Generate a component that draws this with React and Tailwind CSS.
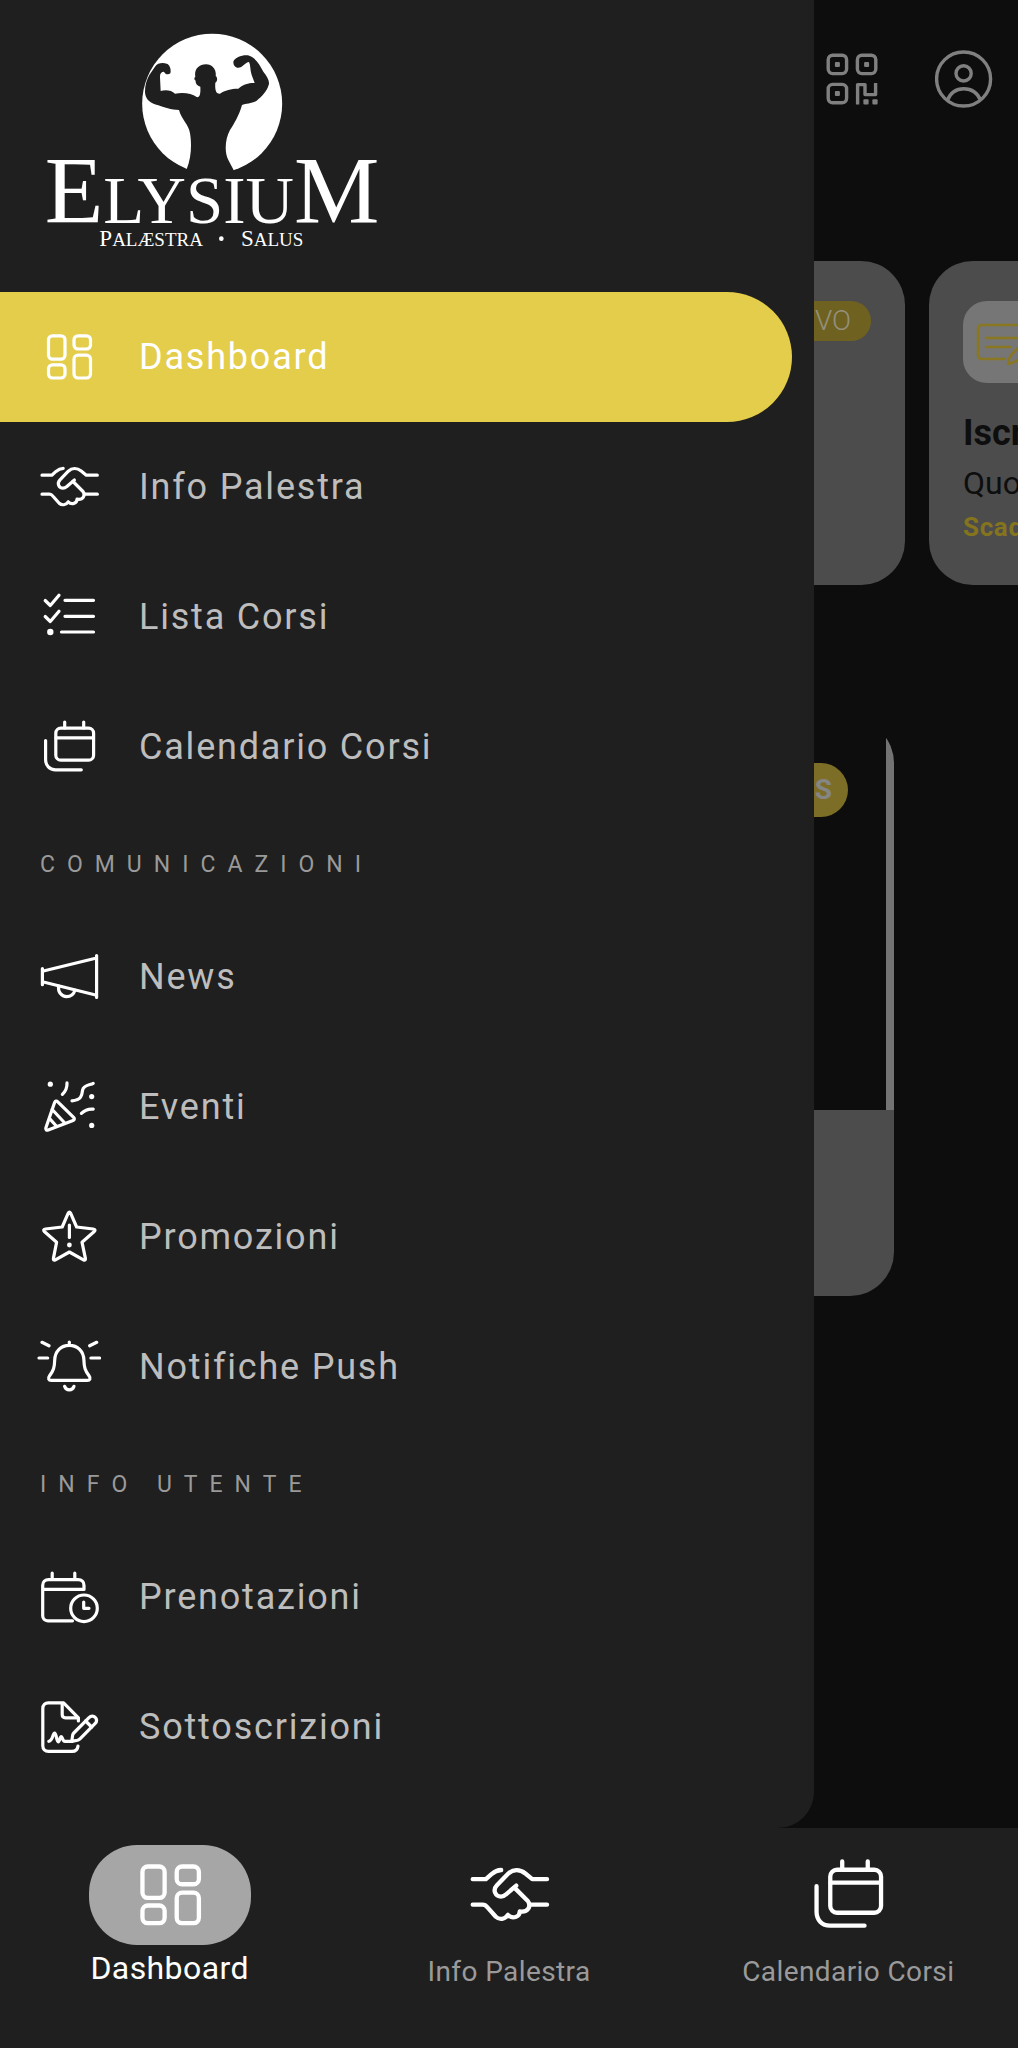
import clsx from 'clsx'

function Icon({ className, strokeWidth = 3.2, children }) {
  return (
    <svg
      viewBox="0 0 64 64"
      fill="none"
      stroke="currentColor"
      strokeWidth={strokeWidth}
      strokeLinecap="round"
      strokeLinejoin="round"
      aria-hidden="true"
      className={clsx('shrink-0', className)}
    >
      {children}
    </svg>
  )
}

const DashboardIcon = (props) => (
  <Icon {...props}>
    <rect x="11.5" y="10.8" width="16.5" height="23.4" rx="4" />
    <rect x="11.5" y="39.8" width="16.5" height="13.2" rx="4" />
    <rect x="37" y="10.8" width="16.5" height="13.2" rx="4" />
    <rect x="37" y="30.2" width="16.5" height="22.8" rx="4" />
  </Icon>
)

const HandshakeIcon = (props) => (
  <Icon {...props}>
    <path d="M5 20.2H14.8L19 16.4C21.4 14.4 23.6 13.5 26.2 13.4" />
    <path d="M60.3 20.2H49.3L44.2 16C40 12.7 35 12.8 31.3 16.2L23 24.8C19.5 28.4 22 33.2 26 33.2C27.4 33.2 28.6 32.7 29.6 31.7L37.4 25" />
    <path d="M36 26.5L46 36.5C48.6 40 46.4 45.3 40 44.2C40.2 48.4 34.5 50.2 31.2 46.8C29 50.3 24.8 50.6 22.2 48.2L16 41.2C15 40 14.2 39.2 12.5 39.2H5" />
    <path d="M47.5 39.2H60.3" />
  </Icon>
)

const ListIcon = (props) => (
  <Icon {...props}>
    <path d="M8.2 15.5L13.3 20.5L22 10.2M8.2 31.5L13.3 36.5L22 26.2" />
    <path d="M28 15.3H56.5M28 31.3H56.5M24.5 47H56.5" />
    <circle cx="13.3" cy="47" r="3.2" fill="currentColor" stroke="none" />
  </Icon>
)

const CalendarsIcon = (props) => (
  <Icon {...props}>
    <rect x="18.8" y="13.2" width="37.8" height="32" rx="5" />
    <path d="M19 22.8H56M27.7 7V13M46.7 7V13" />
    <path d="M8.6 25.5V44.5C8.6 50.5 12.5 54.8 18.5 54.8H44.3" />
  </Icon>
)

const MegaphoneIcon = (props) => (
  <Icon {...props}>
    <path d="M5.4 23.5V39.7M59.6 10.5V52.5M5.4 26.3L59.6 13M5.4 36.7L59.6 50.3" />
    <path d="M21.6 41.2C20.8 47 24.5 51.6 29.5 51.6C33.5 51.6 36.8 49.3 37.9 45.4" />
  </Icon>
)

const PartyIcon = (props) => (
  <Icon {...props}>
    <path d="M17.6 27.5C18.2 26 19.6 25.6 20.8 26.8L36.6 42.3C37.8 43.6 37.5 44.8 36 45.4L11.2 55C9.4 55.6 8.3 54.5 8.9 52.8Z" />
    <path d="M15.2 34.5L27.3 47.5M12.6 43.6L19.3 51" />
    <path d="M30 7.8C30.2 12 28.6 16.2 25.4 19.3" />
    <path d="M56.2 8.4C53.6 10 46.6 9.6 45.6 15C45 20 44.6 25 35 25.8" />
    <path d="M56.2 34.2C51.5 33.8 47.6 35.2 44.4 38.4" />
    <g fill="currentColor" stroke="none">
      <circle cx="13.3" cy="9.2" r="2.6" />
      <circle cx="54.7" cy="21.6" r="2.6" />
      <circle cx="54.7" cy="50.4" r="2.6" />
    </g>
  </Icon>
)

const StarIcon = (props) => (
  <Icon {...props}>
    <path d="M31.2 8.2Q32.4 5.8 33.6 8.2L39.6 22L56.2 24Q59.4 24.6 57 26.8L45 37.2L48.4 53.4Q48.7 56 46.4 54.8L32.4 47L18.4 54.8Q16.1 56 16.4 53.4L19.6 37.2L7.6 26.8Q5.4 24.6 8.4 24L25.2 22Z" />
    <path d="M32.4 20V32.5" />
    <circle cx="32.4" cy="40" r="2.4" fill="currentColor" stroke="none" />
  </Icon>
)

const BellIcon = (props) => (
  <Icon {...props}>
    <path d="M32.3 7V10M32.3 10.3C24 10.3 18 16 17.7 25C17.5 32.5 16.5 35.5 12.6 40.8C10.6 43.6 11.6 45.4 14.4 45.4H50.2C53 45.4 54 43.6 52 40.8C48.1 35.5 47.1 32.5 46.9 25C46.6 16 40.6 10.3 32.3 10.3Z" />
    <path d="M27.6 51.3C29 56 35.6 56 37 51.3" />
    <path d="M5 7.3L12 10.8M2 23H10.7M59.7 7.3L52.7 10.8M62.6 23H53.9" />
  </Icon>
)

const CalendarClockIcon = (props) => (
  <Icon {...props}>
    <path d="M35.5 55.8H10.8C7.8 55.8 5.7 53.8 5.7 50.8V20.4C5.7 17 8.2 14.6 11.5 14.6H41.2C44.6 14.6 47 17 47 20.4V24.4H5.7" />
    <path d="M15.2 8.2V14M37.8 8.2V14" />
    <circle cx="47" cy="43.3" r="13.3" />
    <path d="M46.7 37V43.3H52" />
  </Icon>
)

const SignatureIcon = (props) => (
  <Icon {...props}>
    <path d="M41.4 26V22.8L26.6 7.8H11.4C8 7.8 5.8 10 5.8 13.4V50.8C5.8 54.2 8 56.4 11.4 56.4H35C38.4 56.4 40.6 54.6 41 51" />
    <path d="M25.2 8.4V19.6Q25.2 22.8 28.4 22.8H40.8" />
    <path d="M11.8 46.3C16 46 15.6 38.2 17.6 38.2C19.6 38.2 19.4 46.8 21.2 46.8C22.8 46.8 22.8 41.6 24.2 41.6C25.8 41.6 25.2 46.4 28 46.4H34.8" />
    <path d="M34.8 46.4L35.6 40.4Q35.8 39 36.8 38L52 22.6C54 20.6 56.6 20.6 58.2 22.4C60 24.2 60 26.6 58 28.6L43 43.8Q42 44.8 40.6 45.2Z" />
    <path d="M48.6 26L54.6 32" />
  </Icon>
)

const mainLinks = [
  { label: 'Dashboard', icon: DashboardIcon, active: true },
  { label: 'Info Palestra', icon: HandshakeIcon },
  { label: 'Lista Corsi', icon: ListIcon },
  { label: 'Calendario Corsi', icon: CalendarsIcon },
]

const sections = [
  {
    title: 'COMUNICAZIONI',
    links: [
      { label: 'News', icon: MegaphoneIcon },
      { label: 'Eventi', icon: PartyIcon },
      { label: 'Promozioni', icon: StarIcon },
      { label: 'Notifiche Push', icon: BellIcon },
    ],
  },
  {
    title: 'INFO UTENTE',
    links: [
      { label: 'Prenotazioni', icon: CalendarClockIcon },
      { label: 'Sottoscrizioni', icon: SignatureIcon },
    ],
  },
]

const tabs = [
  { label: 'Dashboard', icon: DashboardIcon, active: true },
  { label: 'Info Palestra', icon: HandshakeIcon },
  { label: 'Calendario Corsi', icon: CalendarsIcon },
]

function Logo() {
  return (
    <svg viewBox="0 0 1080 720" role="img" aria-label="Elysium Palæstra Salus" className="w-[360px] h-[240px]">
      <circle cx="546.5" cy="251" r="210" fill="#fff" />
      <path
        fill="#1f1f1f"
        d="M470 448C485 410 485 370 480 340C476 312 455 300 447 270C425 270 400 262 385 256C362 250 345 238 345 215C345 195 350 180 358 165L375 140C382 128 400 128 410 131C420 133 424 150 421 160C415 165 405 163 402 155C394 155 389 162 390 172L392 213C405 208 425 210 435 221C460 216 485 220 500 231C510 234 512 220 511 200C500 196 496 190 497 182C492 180 492 172 496 170C492 150 505 133 528 133C548 133 560 150 557 168C563 172 563 184 556 188C554 215 560 222 570 221C585 210 610 205 625 206C640 192 660 188 674 189L665 165C660 150 662 135 657 126C645 128 640 138 632 142C618 146 610 138 610 125C615 112 640 103 658 107C675 112 690 135 700 155C712 170 720 185 716 195C710 215 695 230 680 242C665 252 648 250 636 255C628 285 610 315 600 330C586 355 582 395 595 420L612 452V470H470Z"
      />
      <g fill="#fff" fontFamily="'Liberation Serif', serif">
        <text x="546" y="608" textAnchor="middle" fontSize="288">
          E<tspan fontSize="201">LYSIU</tspan>M
        </text>
        <text x="208" y="678" fontSize="69">
          P<tspan fontSize="57">ALÆSTRA</tspan>
        </text>
        <text x="633" y="678" fontSize="69">
          S<tspan fontSize="57">ALUS</tspan>
        </text>
      </g>
      <circle cx="574" cy="656" r="7" fill="#fff" />
    </svg>
  )
}

function DrawerLink({ label, icon: LinkIcon, active }) {
  return (
    <li>
      <a
        href="#"
        className={clsx(
          'flex items-center gap-[38px] h-[130px] pl-[37px] mr-[22px] rounded-r-full text-4xl tracking-wider',
          active ? 'bg-[#e3cd4b] text-white' : 'text-[#bdbdbd]'
        )}
      >
        <LinkIcon className="size-16 text-white" />
        {label}
      </a>
    </li>
  )
}

function Drawer() {
  return (
    <aside className="col-start-1 row-start-1 z-10 w-4/5 pb-9 bg-[#1f1f1f] rounded-br-[36px]">
      <div className="pt-5 pb-8 pl-[30px]">
        <Logo />
      </div>
      <nav>
        <ul>
          {mainLinks.map((link) => (
            <DrawerLink key={link.label} {...link} />
          ))}
        </ul>
        {sections.map((section) => (
          <section key={section.title}>
            <h2 className="flex items-center h-[100px] pt-1.5 pl-10 text-[23px] tracking-[12px] text-[#9a9a9a]">
              {section.title}
            </h2>
            <ul>
              {section.links.map((link) => (
                <DrawerLink key={link.label} {...link} />
              ))}
            </ul>
          </section>
        ))}
      </nav>
    </aside>
  )
}

function Home() {
  return (
    <main className="col-start-1 row-start-1 min-w-0 overflow-hidden bg-[#0d0d0d]">
      <header className="flex justify-end gap-[54px] pt-[50px] pr-[25px] text-[#808080]">
        <button type="button" aria-label="Codice QR">
          <svg viewBox="0 0 58 58" fill="none" stroke="currentColor" strokeWidth="3.4" strokeLinejoin="round" className="size-[58px]">
            <rect x="5.2" y="5.2" width="18.4" height="18.4" rx="4.5" />
            <rect x="34.4" y="5.2" width="18.4" height="18.4" rx="4.5" />
            <rect x="5.2" y="34.4" width="18.4" height="18.4" rx="4.5" />
            <path d="M34.6 54.5V34.6H42V44.6H52.6V33" />
            <g fill="currentColor" stroke="none">
              <rect x="11.9" y="11.9" width="5" height="5" rx="1" />
              <rect x="41.1" y="11.9" width="5" height="5" rx="1" />
              <rect x="11.9" y="41.1" width="5" height="5" rx="1" />
              <rect x="40.4" y="49.2" width="5.2" height="5.2" rx="1" />
              <rect x="49.4" y="49.2" width="5.2" height="5.2" rx="1" />
            </g>
          </svg>
        </button>
        <button type="button" aria-label="Profilo">
          <svg viewBox="0 0 58 58" fill="none" stroke="currentColor" strokeWidth="3.4" className="size-[58px]">
            <circle cx="28.6" cy="29" r="27" />
            <circle cx="28.6" cy="23.4" r="7.6" />
            <path d="M12.4 50.4C15.4 42.6 20.6 38.8 28.8 38.8C37 38.8 42.4 42.4 45.6 50.4" />
          </svg>
        </button>
      </header>

      <div className="flex gap-6 mt-[153px] pl-6">
        <article className="flex justify-end items-start shrink-0 w-[calc(100%-113px)] h-[324px] pt-10 pr-[34px] rounded-[44px] bg-[#4c4c4c]">
          <span className="h-10 px-5 rounded-full bg-[#6f6220] text-[28px] leading-10 font-light text-[#94907c]">ATTIVO</span>
        </article>
        <article className="shrink-0 w-[calc(100%-113px)] h-[324px] pt-10 pl-[34px] rounded-[44px] bg-[#4c4c4c] whitespace-nowrap">
          <div className="flex items-center justify-center size-[82px] rounded-3xl bg-[#767676]">
            <svg
              viewBox="0 0 60 48"
              fill="none"
              stroke="#8a7722"
              strokeWidth="2.6"
              strokeLinecap="round"
              strokeLinejoin="round"
              className="w-[60px] h-12"
            >
              <path d="M31 41H8Q4 41 4 37V11Q4 7 8 7H52Q56 7 56 11V16" />
              <path d="M12 20H46M12 29H36" />
              <path d="M34 46Q34.5 40 38 36L51 23L57 29L44 42Q40 45 34 46Z" />
            </svg>
          </div>
          <h3 className="mt-7 text-4xl leading-[44px] font-bold text-[#0e0e0e]">Iscrizione</h3>
          <p className="mt-1 text-[32px] leading-[48px] text-[#0e0e0e]">Quota</p>
          <p className="mt-1 text-[26px] leading-8 font-bold tracking-wide text-[#84741e]">Scadenza</p>
        </article>
      </div>

      <article className="mt-[134px] ml-6 mr-[124px] rounded-[44px] overflow-hidden">
        <div className="pr-2 bg-[linear-gradient(to_left,#737373_8px,#0d0d0d_8px)]">
          <div className="flex justify-end items-start h-[391px] pt-11 pr-[38px]">
            <span className="px-4 rounded-full bg-[#7d6e27] text-[28px] leading-[54px] font-bold text-[#858585]">NEWS</span>
          </div>
        </div>
        <div className="h-[186px] bg-[#4c4c4c]" />
      </article>
    </main>
  )
}

function TabBar() {
  return (
    <nav className="grid grid-cols-3 pt-[17px] pb-[49px] bg-[#1f1f1f]">
      {tabs.map(({ label, icon: TabIcon, active }) => (
        <a key={label} href="#" className="flex flex-col items-center tracking-wide">
          <span
            className={clsx(
              'flex items-center justify-center w-[162px] h-[100px] rounded-[48px] text-white',
              active && 'bg-[#a6a6a6]'
            )}
          >
            <TabIcon className="size-[86px]" />
          </span>
          <span
            className={clsx(
              active ? 'text-[32px] leading-[46px] text-white' : 'text-[28px] leading-[54px] text-[#9a9a9a]'
            )}
          >
            {label}
          </span>
        </a>
      ))}
    </nav>
  )
}

export default function App() {
  return (
    <div className="flex flex-col min-h-screen bg-[#1f1f1f] font-[Roboto,sans-serif]">
      <div className="grid grow bg-[#0d0d0d]">
        <Home />
        <Drawer />
      </div>
      <TabBar />
    </div>
  )
}
